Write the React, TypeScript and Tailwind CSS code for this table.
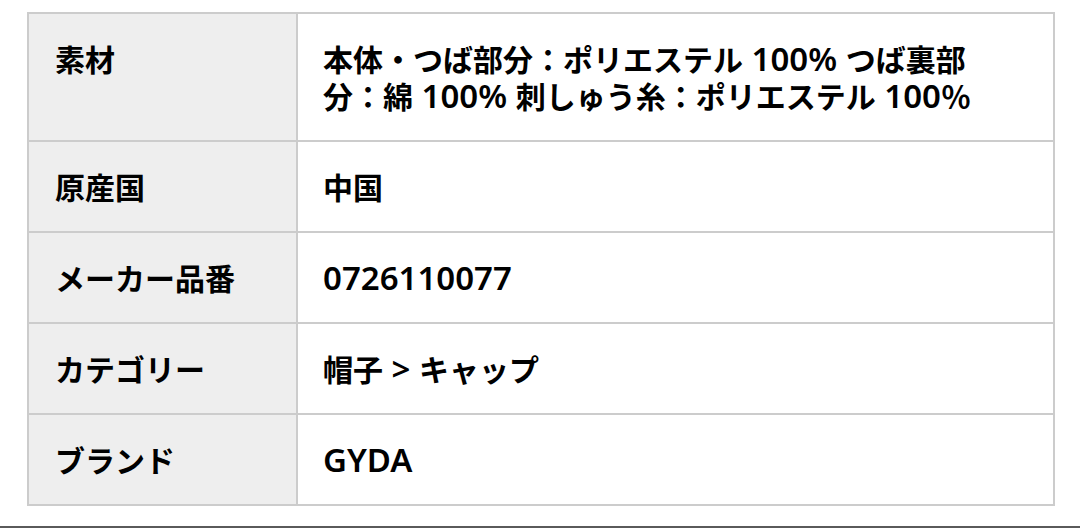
import type { ReactNode } from "react";

// Latin runs are set a bit larger, like the reference's Latin glyphs
function L({ children }: { children: ReactNode }) {
  return (
    <span className="font-['Noto_Sans',sans-serif] text-[33px] leading-none">
      {children}
    </span>
  );
}

const rows: { label: string; value: ReactNode }[] = [
  {
    label: "素材",
    value: (
      <>
        本体・つば部分：ポリエステル<L> 100% </L>つば裏部
        <br />
        分：綿<L> 100% </L>刺しゅう糸：ポリエステル<L> 100</L>％
      </>
    ),
  },
  { label: "原産国", value: "中国" },
  { label: "メーカー品番", value: <L>0726110077</L> },
  {
    label: "カテゴリー",
    value: (
      <>
        帽子<L> &gt; </L>キャップ
      </>
    ),
  },
  { label: "ブランド", value: <L>GYDA</L> },
];

export default function App() {
  return (
    <div className="w-[1080px] h-[528px] bg-white flex flex-col text-black font-['Noto_Sans_CJK_JP',sans-serif]">
      <table className="ml-[27px] mt-[12px] w-[1028px] border-collapse border-2 border-[#cccccc]">
        <tbody>
          {rows.map((row) => (
            <tr key={row.label} className="border-b-2 border-[#cccccc]">
              <th className="w-[269px] bg-[#eeeeee] border-r-2 border-[#cccccc] pl-[26px] pr-4 py-[26px] text-left align-top font-semibold text-[30px] leading-[37px]">
                {row.label}
              </th>
              <td className="pl-[25px] pr-4 py-[26px] align-top font-semibold text-[30px] leading-[37px]">
                {row.value}
              </td>
            </tr>
          ))}
        </tbody>
      </table>
      <div className="mt-auto h-[2px] bg-[#5a5a5a]" />
    </div>
  );
}
